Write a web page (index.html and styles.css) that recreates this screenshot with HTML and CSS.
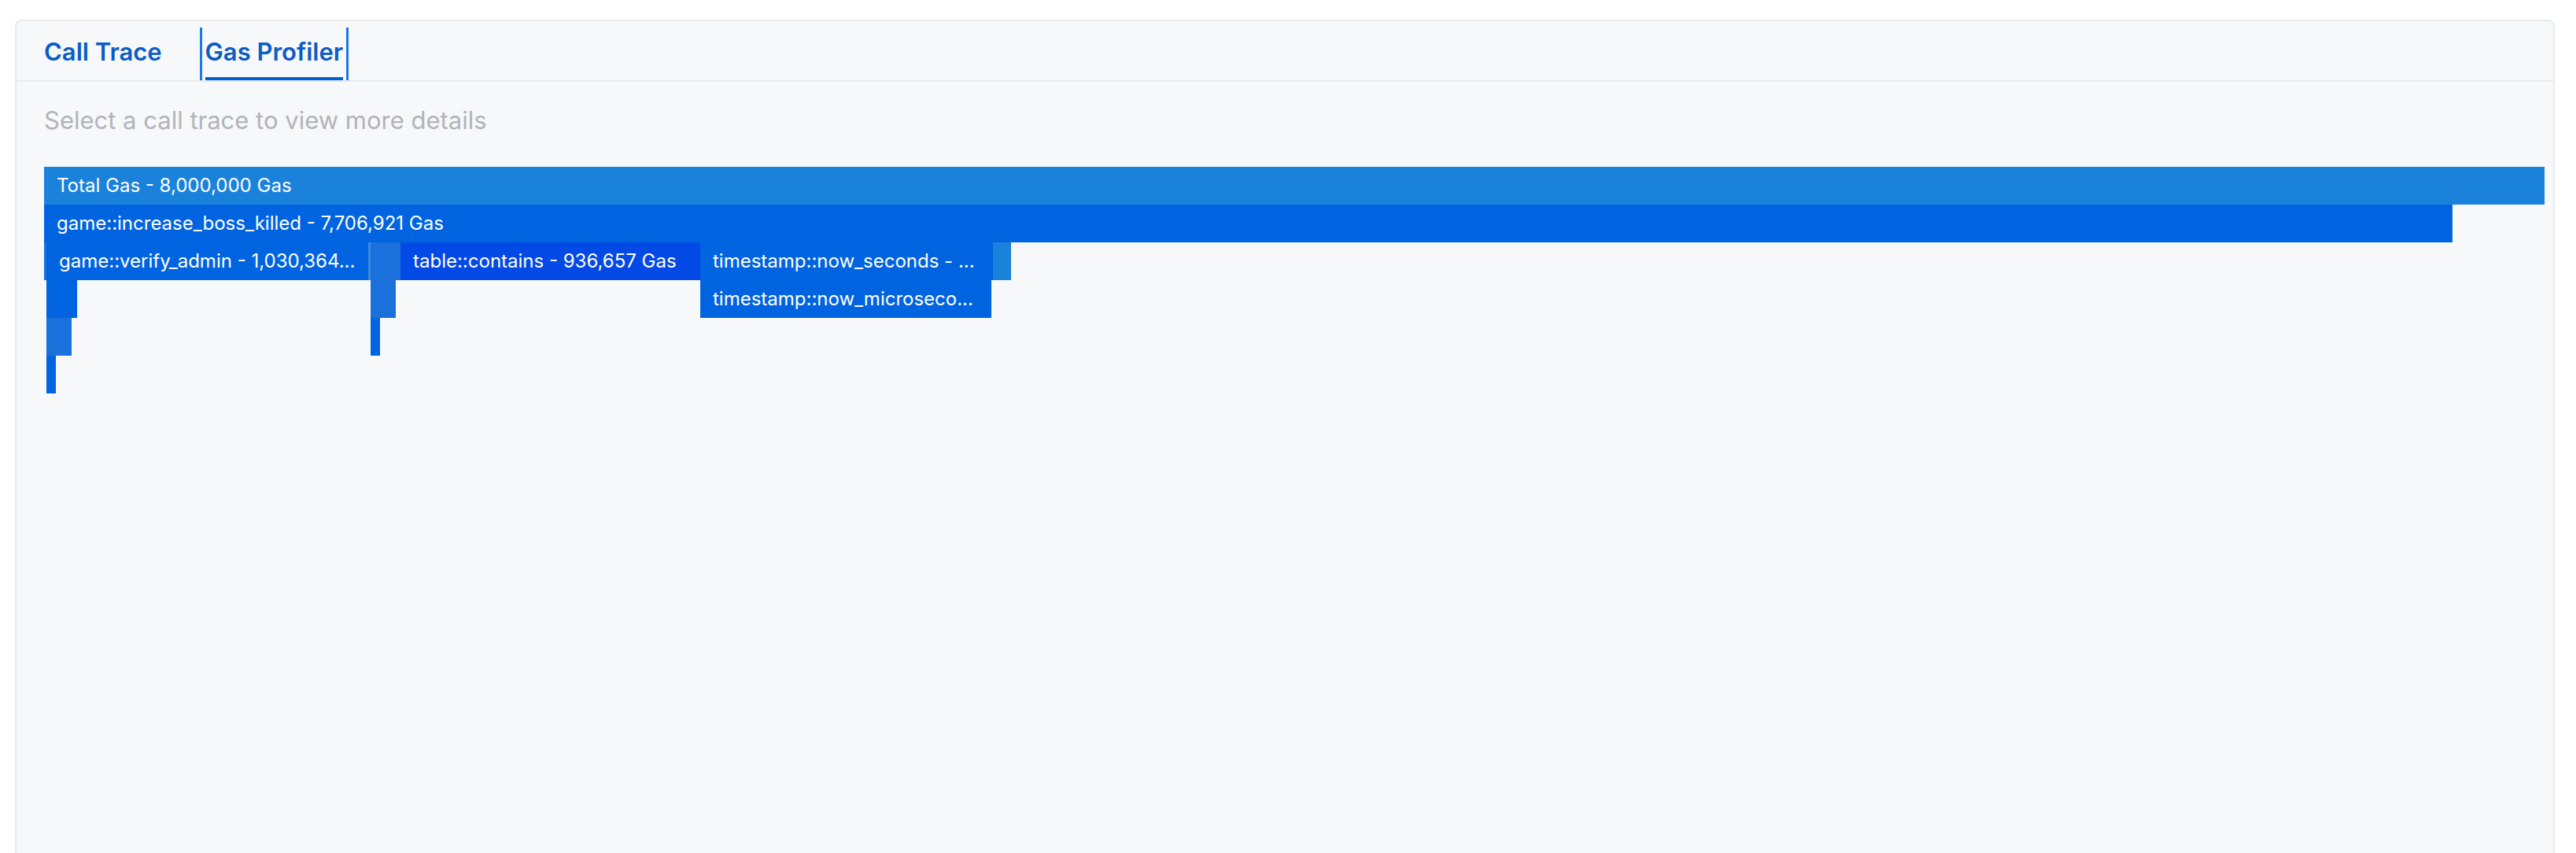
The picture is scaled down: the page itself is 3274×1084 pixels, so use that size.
FILE: index.html
```html
<!DOCTYPE html>
<html lang="en">
<head>
    <meta charset="UTF-8">
    <meta name="viewport" content="width=device-width, initial-scale=1.0">
    <title>Gas Profiler</title>
    <link rel="stylesheet" href="styles.css">
</head>
<body>
    <div class="panel">
        <div class="tabs">
            <button class="tab"><span class="tab-label">Call Trace</span></button>
            <button class="tab active"><span class="tab-label">Gas Profiler</span></button>
        </div>

        <div class="panel-body">
            <p class="hint">Select a call trace to view more details</p>

            <div class="flame">
                <div class="flame-row">
                    <div class="bar light" style="width: 3178px">Total Gas - 8,000,000 Gas</div>
                </div>
                <div class="flame-row">
                    <div class="bar" style="width: 3061px">game::increase_boss_killed - 7,706,921 Gas</div>
                </div>
                <div class="flame-row">
                    <div class="bar mid" style="width: 3px"></div>
                    <div class="bar" style="width: 409px">game::verify_admin - 1,030,364...</div>
                    <div class="bar pale" style="width: 3px"></div>
                    <div class="bar mid" style="width: 38px"></div>
                    <div class="bar deep" style="width: 381px">table::contains - 936,657 Gas</div>
                    <div class="bar" style="width: 372px">timestamp::now_seconds - ...</div>
                    <div class="bar light" style="width: 23px"></div>
                </div>
                <div class="flame-row">
                    <div class="bar" style="width: 39px; margin-left: 3px"></div>
                    <div class="bar mid" style="width: 32px; margin-left: 373px"></div>
                    <div class="bar" style="width: 370px; margin-left: 387px">timestamp::now_microseco...</div>
                </div>
                <div class="flame-row">
                    <div class="bar mid" style="width: 32px; margin-left: 3px"></div>
                    <div class="bar" style="width: 12px; margin-left: 380px"></div>
                </div>
                <div class="flame-row">
                    <div class="bar" style="width: 12px; margin-left: 3px"></div>
                </div>
            </div>
        </div>
    </div>
</body>
</html>
```

FILE: styles.css
```css
body {
    margin: 0;
    background: #fff;
    font-family: Inter, "Noto Sans", sans-serif;
}
.panel {
    box-sizing: border-box;
    width: 3228px;
    height: 1059px;
    margin: 25px 0 0 19px;
    border: 2px solid #e8eaed;
    border-bottom: none;
    border-radius: 8px 8px 0 0;
    background: #f7f8fa;
}
.tabs {
    display: flex;
    gap: 41px;
    padding: 8px 0 0 28px;
    border-bottom: 2px solid #e8eaed;
}
.tab {
    padding: 12px 4px 0;
    border: none;
    border-left: 3px solid transparent;
    border-right: 3px solid transparent;
    background: none;
    font-family: Inter, "Noto Sans", sans-serif;
    font-size: 31px;
    font-weight: 600;
    line-height: normal;
    color: #0a5cc7;
    cursor: pointer;
}
.tab-label {
    display: block;
    padding-bottom: 14px;
    border-bottom: 4px solid transparent;
}
.tab.active {
    border-left-color: #1c78e6;
    border-right-color: #1c78e6;
}
.tab.active .tab-label {
    border-bottom-color: #0062d1;
}
.panel-body {
    padding: 30px 0 0 35px;
}
.hint {
    margin: 0 0 41px;
    font-size: 31px;
    line-height: normal;
    color: #b1b4b9;
}
.flame-row {
    display: flex;
    height: 48px;
}
.bar {
    flex: none;
    box-sizing: border-box;
    height: 48px;
    padding-left: 16px;
    overflow: hidden;
    white-space: nowrap;
    font-size: 24px;
    line-height: 48px;
    color: #fff;
    background: #0064e0;
}
.bar:empty {
    padding: 0;
}
.bar.light {
    background: #1b82dc;
}
.bar.mid {
    background: #1a71dc;
}
.bar.pale {
    background: #3a8ae2;
}
.bar.deep {
    background: #0349e6;
}
```
